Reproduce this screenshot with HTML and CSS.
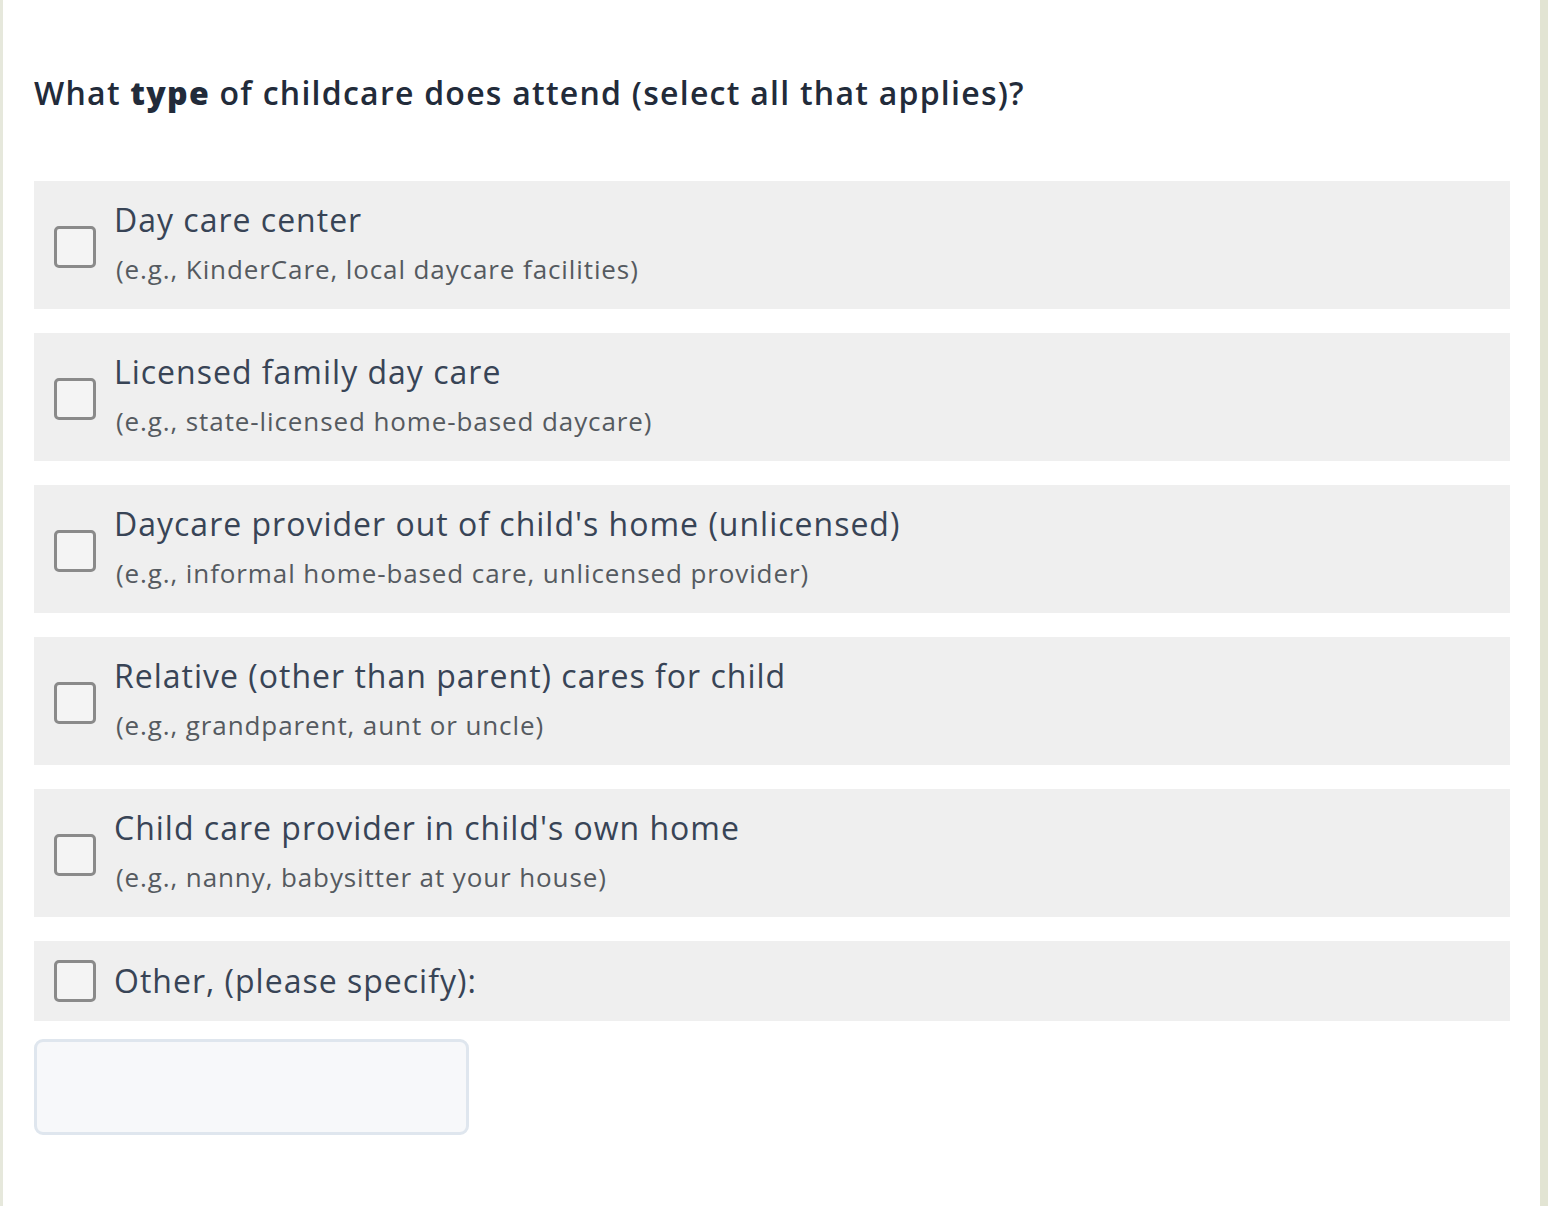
FILE: index.html
```html
<!DOCTYPE html>
<html lang="en">
<head>
<meta charset="utf-8">
<title>Childcare type</title>
<link rel="stylesheet" href="styles.css">
</head>
<body>
<div class="page">
  <h2 class="question">What <strong>type</strong> of childcare does attend (select all that applies)?</h2>
  <div class="options">
    <label class="option">
      <span class="box"></span>
      <span class="text">
        <span class="label">Day care center</span>
        <span class="hint">(e.g., KinderCare, local daycare facilities)</span>
      </span>
    </label>
    <label class="option">
      <span class="box"></span>
      <span class="text">
        <span class="label">Licensed family day care</span>
        <span class="hint">(e.g., state-licensed home-based daycare)</span>
      </span>
    </label>
    <label class="option">
      <span class="box"></span>
      <span class="text">
        <span class="label">Daycare provider out of child's home (unlicensed)</span>
        <span class="hint">(e.g., informal home-based care, unlicensed provider)</span>
      </span>
    </label>
    <label class="option">
      <span class="box"></span>
      <span class="text">
        <span class="label">Relative (other than parent) cares for child</span>
        <span class="hint">(e.g., grandparent, aunt or uncle)</span>
      </span>
    </label>
    <label class="option">
      <span class="box"></span>
      <span class="text">
        <span class="label">Child care provider in child's own home</span>
        <span class="hint">(e.g., nanny, babysitter at your house)</span>
      </span>
    </label>
    <label class="option option-other">
      <span class="box"></span>
      <span class="text">
        <span class="label">Other, (please specify):</span>
      </span>
    </label>
  </div>
  <div class="other-input"></div>
</div>
</body>
</html>
```

FILE: styles.css
```css
html, body {
  margin: 0;
  padding: 0;
  background: #ffffff;
}
body {
  font-family: "Open Sans", "Noto Sans", sans-serif;
}
.page {
  box-sizing: border-box;
  min-height: 1206px;
  border-left: 3px solid #e6e8dc;
  border-right: 8px solid #e2e4d3;
  padding: 69px 30px 0 31px;
}
.question {
  margin: 0;
  font-size: 32px;
  line-height: 48px;
  font-weight: 600;
  color: #222b3a;
  letter-spacing: 1.25px;
}
.question strong {
  font-weight: 800;
}
.options {
  display: flex;
  flex-direction: column;
  gap: 24px;
  margin-top: 64px;
}
.option {
  display: flex;
  align-items: center;
  background: #efefef;
  padding: 17px 20px 13px;
}
.box {
  flex: none;
  box-sizing: border-box;
  width: 42px;
  height: 42px;
  border: 3px solid #8a8a8a;
  border-radius: 5px;
  margin-right: 18px;
  background: #f4f4f4;
}
.text {
  display: flex;
  flex-direction: column;
}
.label {
  font-size: 32px;
  line-height: 44px;
  color: #384456;
  letter-spacing: 1px;
}
.hint {
  font-size: 26px;
  line-height: 54px;
  color: #555a60;
  letter-spacing: 0.9px;
  padding-left: 2px;
}
.option-other {
  padding: 18px 20px;
}
.other-input {
  box-sizing: border-box;
  width: 435px;
  height: 96px;
  margin-top: 18px;
  border: 3px solid #dfe6ee;
  border-radius: 9px;
  background: #f7f8fa;
}
```
